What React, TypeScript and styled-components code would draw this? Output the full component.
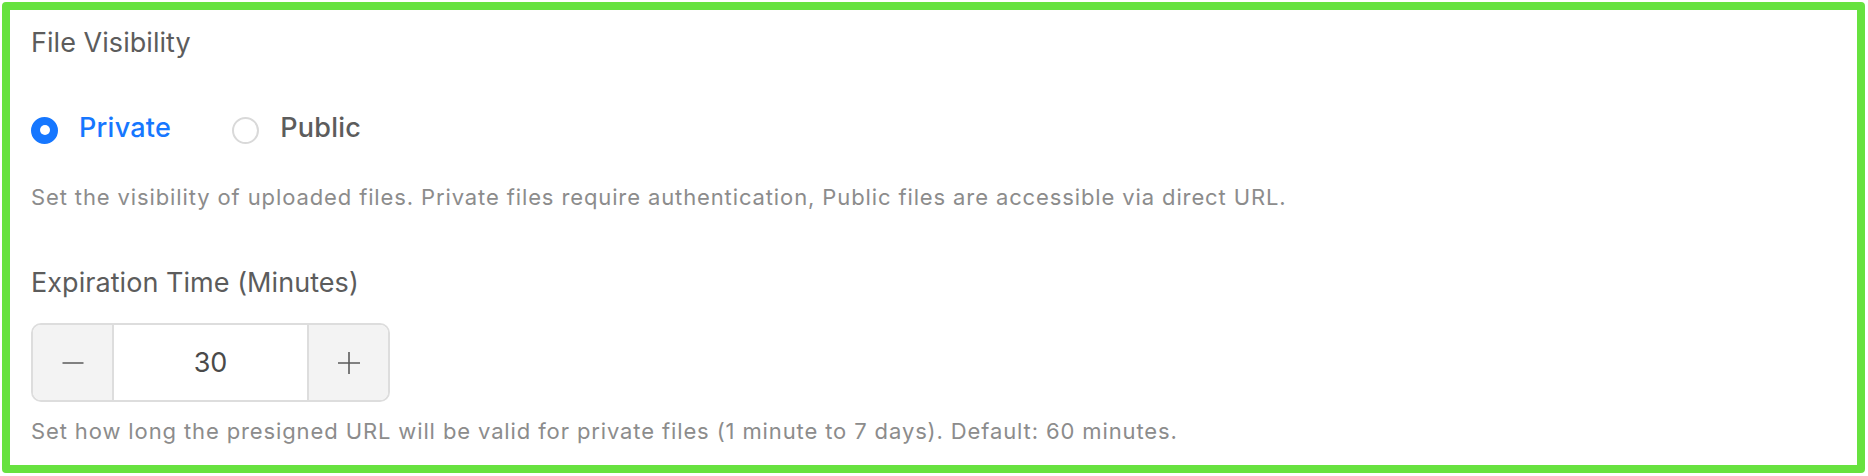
import React, { useState } from "react";
import styled, { createGlobalStyle } from "styled-components";

const GlobalStyle = createGlobalStyle`
  html, body {
    margin: 0;
    padding: 0;
    background: #ffffff;
  }
  body {
    font-family: Inter, Roboto, "Liberation Sans", Arial, sans-serif;
  }
  * { box-sizing: border-box; }
`;

const Frame = styled.div`
  margin: 2px;
  width: 1863px;
  height: 471px;
  border: 8px solid #67e23f;
  border-radius: 4px;
  padding: 15px 21px 0;
  background: #ffffff;
  display: flex;
  flex-direction: column;
`;

const FieldLabel = styled.div<{ $top?: number }>`
  margin-top: ${(p) => p.$top ?? 0}px;
  font-size: 27px;
  line-height: 36px;
  letter-spacing: 0.05px;
  color: #5c5c5c;
  font-weight: 400;
`;

const RadioGroup = styled.div`
  margin-top: 51px;
  height: 36px;
  display: flex;
  align-items: center;
  gap: 61px;
`;

const RadioItem = styled.label`
  display: flex;
  align-items: center;
  gap: 21px;
  cursor: pointer;
`;

const RadioCircle = styled.span<{ $checked: boolean }>`
  width: 27px;
  height: 27px;
  border-radius: 50%;
  border: 2px solid ${(p) => (p.$checked ? "#1677ff" : "#d9d9d9")};
  background: ${(p) => (p.$checked ? "#1677ff" : "#ffffff")};
  display: flex;
  align-items: center;
  justify-content: center;
  &::after {
    content: "";
    width: 10px;
    height: 10px;
    border-radius: 50%;
    background: #ffffff;
    display: ${(p) => (p.$checked ? "block" : "none")};
  }
`;

const RadioText = styled.span<{ $checked: boolean }>`
  font-size: 27px;
  line-height: 32px;
  margin-bottom: 4px;
  letter-spacing: 0.25px;
  font-weight: 500;
  color: ${(p) => (p.$checked ? "#1677ff" : "#5c5c5c")};
`;

const Help = styled.div<{ $top: number }>`
  margin-top: ${(p) => p.$top}px;
  font-size: 22px;
  line-height: 30px;
  letter-spacing: 0.88px;
  color: #8c8c8c;
`;

const Stepper = styled.div`
  margin-top: 22px;
  width: 359px;
  height: 79px;
  border: 2px solid #dddddd;
  border-radius: 10px;
  overflow: hidden;
  display: flex;
`;

const StepButton = styled.button<{ $side: "left" | "right" }>`
  width: 81px;
  height: 100%;
  border: none;
  ${(p) => (p.$side === "left" ? "border-right" : "border-left")}: 2px solid #dddddd;
  background: #f3f3f3;
  display: flex;
  align-items: center;
  justify-content: center;
  padding: 0;
  cursor: pointer;
`;

const ValueInput = styled.input`
  flex: 1;
  min-width: 0;
  border: none;
  outline: none;
  text-align: center;
  font-family: Inter, Roboto, "Liberation Sans", Arial, sans-serif;
  font-size: 27px;
  color: #4a4a4a;
  background: #ffffff;
`;

const MinusIcon = () => (
  <svg width="22" height="22" viewBox="0 0 22 22">
    <line x1="0.5" y1="11" x2="21.5" y2="11" stroke="#5a5a5a" strokeWidth="1.6" />
  </svg>
);

const PlusIcon = () => (
  <svg width="22" height="22" viewBox="0 0 22 22">
    <line x1="0" y1="11" x2="22" y2="11" stroke="#5a5a5a" strokeWidth="1.6" />
    <line x1="11" y1="0" x2="11" y2="22" stroke="#5a5a5a" strokeWidth="1.6" />
  </svg>
);

export default function App() {
  const [visibility, setVisibility] = useState<"private" | "public">("private");
  const [minutes, setMinutes] = useState(30);

  return (
    <>
      <GlobalStyle />
      <Frame>
        <FieldLabel>File Visibility</FieldLabel>
        <RadioGroup>
          {(["private", "public"] as const).map((v) => (
            <RadioItem key={v} onClick={() => setVisibility(v)}>
              <RadioCircle $checked={visibility === v} />
              <RadioText $checked={visibility === v}>
                {v === "private" ? "Private" : "Public"}
              </RadioText>
            </RadioItem>
          ))}
        </RadioGroup>
        <Help $top={34}>
          Set the visibility of uploaded files. Private files require authentication, Public files are accessible via direct URL.
        </Help>
        <FieldLabel $top={53}>Expiration Time (Minutes)</FieldLabel>
        <Stepper>
          <StepButton $side="left" onClick={() => setMinutes((m) => Math.max(1, m - 1))}>
            <MinusIcon />
          </StepButton>
          <ValueInput
            value={minutes}
            onChange={(e) => setMinutes(Number(e.target.value) || 0)}
          />
          <StepButton $side="right" onClick={() => setMinutes((m) => Math.min(10080, m + 1))}>
            <PlusIcon />
          </StepButton>
        </Stepper>
        <Help $top={14}>
          Set how long the presigned URL will be valid for private files (1 minute to 7 days). Default: 60 minutes.
        </Help>
      </Frame>
    </>
  );
}
